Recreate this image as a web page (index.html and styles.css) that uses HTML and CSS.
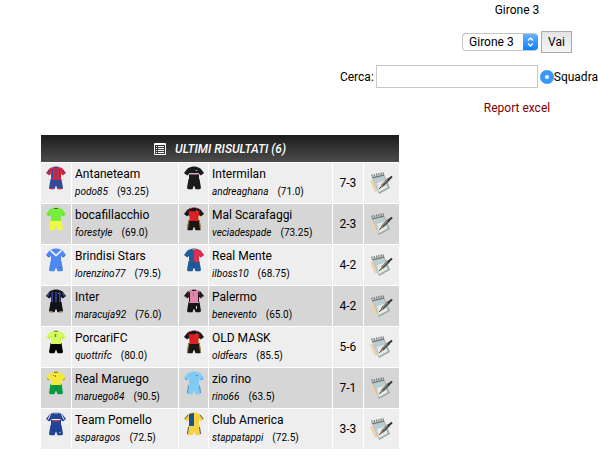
FILE: index.html
```
<!DOCTYPE html>
<html lang="it">

<head>
  <meta charset="UTF-8">
  <meta name="viewport" content="width=device-width, initial-scale=1.0">
  <title>Girone 3</title>
  <link rel="stylesheet" href="styles.css">
</head>

<body>

  <!-- icone condivise -->
  <svg class="sprite" aria-hidden="true">
    <symbol id="kit" viewBox="0 0 20 24">
      <path class="shorts" d="M4.5 13h11l1.5 9-1 1.2h-4.5L10.300 20h-.6l-1.200 3.200H4L3 22z" />
      <path class="sleeve" d="M6 1.500 3.500 2.500 0 7l3.200 2.500L5.500 7.500z" />
      <path class="sleeve" d="M14 1.500 16.500 2.500 20 7l-3.200 2.500-2.300-2z" />
      <path class="shirt" d="M4.500 2 8 .8h4L15.500 2 15 7.500v6.500H5V7.500z" />
      <path class="collar" d="M7.500 .7h5L11.500 2h-3z" />
    </symbol>
    <symbol id="pad" viewBox="0 0 24 24">
      <path fill="#ecd3b0" d="M1 10l4-2 4 12-3 1z" />
      <path fill="#9ea7a6" d="M3 6 15 3l6 14-11 6z" />
      <path fill="#bccdd0" d="M3 5.500 14.500 3 19 16l-9.500 5.500z" />
      <path fill="#e3ecea" d="M8 12l7-2 3.500 6.500-8.500 4.500z" />
      <path fill="none" stroke="#6f7774" stroke-width="1.200" d="M3 5.500V3.500M5.300 5V3M7.600 4.500v-2M9.900 4V2M12.200 3.500v-2M14.300 3.200V1.500M3 6.800l12-2.700" />
      <path fill="none" stroke="#555" stroke-width="3" d="M13.500 14.500 20 8" />
      <path fill="none" stroke="#9b9390" stroke-width="1" d="M13.500 13.500 19 8" />
      <path fill="none" stroke="#333" stroke-width="2" d="M19 9l4-3.500" />
      <path fill="#b5652f" d="M12.500 13.500l2 2-3.500 1.500z" />
      <path fill="none" stroke="#444" stroke-width="1" d="M10 17.800l2.500-1.800" />
    </symbol>
  </svg>

  <form class="filters">
    <div class="filter-row">Girone 3</div>
    <div class="filter-row">
      <span class="select-box">
        <select name="girone" aria-label="Girone">
          <option>Girone 1</option>
          <option>Girone 2</option>
          <option selected>Girone 3</option>
        </select>
        <svg class="arrows" viewBox="0 0 15 18" aria-hidden="true">
          <path d="M5 7.500 7.500 5 10 7.500M5 10.500 7.500 13 10 10.500" />
        </svg>
      </span>
      <button type="button">Vai</button>
    </div>
    <div class="search-row">
      <label for="cerca">Cerca:</label>
      <input type="text" id="cerca" name="cerca">
      <span class="choice"><input type="radio" id="squadra" name="tipo" checked><label for="squadra">Squadra</label></span>
    </div>
    <div class="filter-row"><a class="report" href="#">Report excel</a></div>
  </form>

  <table class="results">
    <colgroup>
      <col class="col-kit">
      <col class="col-home">
      <col class="col-kit">
      <col class="col-away">
      <col class="col-score">
      <col class="col-pad">
    </colgroup>
    <thead>
      <tr>
        <th colspan="6">
          <div class="heading">
            <svg class="list" viewBox="0 0 12 12" aria-hidden="true">
              <path d="M.5 .5h11v11H.5zM1 1.500h10M2 3.500h1M4 3.500h6M2 5.500h1M4 5.500h6M2 7.500h1M4 7.500h6M2 9.500h1M4 9.500h6" />
            </svg>
            <span>ULTIMI RISULTATI (6)</span>
          </div>
        </th>
      </tr>
    </thead>
    <tbody>
      <tr>
        <td class="kit">
          <svg class="antaneteam" viewBox="0 0 20 24">
            <use href="#kit" />
            <path stroke="#34499c" d="M6.500 3v10M10 2v11M13.500 3v10M3.500 3.500l-2 4M16.500 3.500l2 4" />
            <path stroke="#d8263c" d="M3.500 22.500H8M12 22.500h4.500" />
          </svg>
        </td>
        <td class="team"><div class="name">Antaneteam</div><div class="coach"><i>podo85</i><span>(93.25)</span></div></td>
        <td class="kit">
          <svg class="black" viewBox="0 0 20 24">
            <use href="#kit" />
            <path stroke="#aebdcb" d="M5 7.500h10" />
            <path stroke="#a34a5a" d="M5 8.500h10" />
            <path stroke="#8fa3b5" d="M11.500 4.500h2" />
          </svg>
        </td>
        <td class="team"><div class="name">Intermilan</div><div class="coach"><i>andreaghana</i><span>(71.0)</span></div></td>
        <td class="score">7-3</td>
        <td class="pad"><a href="#" aria-label="Dettagli"><svg viewBox="0 0 24 24"><use href="#pad" /></svg></a></td>
      </tr>
      <tr>
        <td class="kit">
          <svg class="bocafillacchio" viewBox="0 0 20 24">
            <use href="#kit" />
            <path stroke="#4fc832" d="M2 8.500l2-2M18 8.500l-2-2" />
            <path stroke="#46682f" d="M8 1.500h4" />
          </svg>
        </td>
        <td class="team"><div class="name">bocafillacchio</div><div class="coach"><i>forestyle</i><span>(69.0)</span></div></td>
        <td class="kit">
          <svg class="red-black" viewBox="0 0 20 24">
            <use href="#kit" />
            <path stroke="#1b1718" stroke-width="2.500" d="M5 3h10" />
            <path stroke="#b79238" d="M5.500 9v4M14.500 9v4M4.500 14l-1 8M15.500 14l1 8M12 4h1.500" />
          </svg>
        </td>
        <td class="team"><div class="name">Mal Scarafaggi</div><div class="coach"><i>veciadespade</i><span>(73.25)</span></div></td>
        <td class="score">2-3</td>
        <td class="pad"><a href="#" aria-label="Dettagli"><svg viewBox="0 0 24 24"><use href="#pad" /></svg></a></td>
      </tr>
      <tr>
        <td class="kit">
          <svg class="brindisi" viewBox="0 0 20 24">
            <use href="#kit" />
            <path stroke="#fff" stroke-width="1.500" d="M4.500 2.500 10 7.500l5.500-5" />
            <path stroke="#3562b5" d="M13 19.500h2M1 7.500l2 1.500M19 7.500 17 9" />
          </svg>
        </td>
        <td class="team"><div class="name">Brindisi Stars</div><div class="coach"><i>lorenzino77</i><span>(79.5)</span></div></td>
        <td class="kit">
          <svg class="real-mente" viewBox="0 0 20 24">
            <use href="#kit" />
            <path fill="#dc2f50" d="M10 1.500 14 1.500l2.500 1L20 7l-3.200 2.500L15 8v6h-5z" />
            <path stroke="#1c4474" d="M10 14v6" />
            <path stroke="#99885f" d="M8 1.500h4" />
          </svg>
        </td>
        <td class="team"><div class="name">Real Mente</div><div class="coach"><i>ilboss10</i><span>(68.75)</span></div></td>
        <td class="score">4-2</td>
        <td class="pad"><a href="#" aria-label="Dettagli"><svg viewBox="0 0 24 24"><use href="#pad" /></svg></a></td>
      </tr>
      <tr>
        <td class="kit">
          <svg class="inter" viewBox="0 0 20 24">
            <use href="#kit" />
            <path stroke="#3547aa" stroke-width="1.500" d="M6.200 3v10M10 3v10M13.800 3v10M3.500 4l-2 3.500M16.500 4l2 3.500" />
            <path stroke="#a78f50" d="M3.500 22.500h3M13.500 22.500h3M12 4.500h1" />
          </svg>
        </td>
        <td class="team"><div class="name">Inter</div><div class="coach"><i>maracuja92</i><span>(76.0)</span></div></td>
        <td class="kit">
          <svg class="palermo" viewBox="0 0 20 24">
            <use href="#kit" />
            <path stroke="#1d1719" d="M5.500 3v10M14.500 3v10" />
            <path stroke="#b96085" d="M9.500 4v3M1 7.500l2 1.500M19 7.500 17 9" />
            <path stroke="#ddd" d="M12.500 17v3" />
          </svg>
        </td>
        <td class="team"><div class="name">Palermo</div><div class="coach"><i>benevento</i><span>(65.0)</span></div></td>
        <td class="score">4-2</td>
        <td class="pad"><a href="#" aria-label="Dettagli"><svg viewBox="0 0 24 24"><use href="#pad" /></svg></a></td>
      </tr>
      <tr>
        <td class="kit">
          <svg class="porcari" viewBox="0 0 20 24">
            <use href="#kit" />
            <path stroke="#7d8245" stroke-width="1.500" d="M9.500 4v3" />
            <path stroke="#b2d957" d="M2 8.500l2-2M18 8.500l-2-2" />
          </svg>
        </td>
        <td class="team"><div class="name">PorcariFC</div><div class="coach"><i>quottrifc</i><span>(80.0)</span></div></td>
        <td class="kit">
          <svg class="red-black" viewBox="0 0 20 24">
            <use href="#kit" />
            <path stroke="#1b1718" stroke-width="2.500" d="M5 3h10" />
            <path stroke="#b79238" d="M5.500 9v4M14.500 9v4M4.500 14l-1 8M15.500 14l1 8M12 4h1.500" />
          </svg>
        </td>
        <td class="team"><div class="name">OLD MASK</div><div class="coach"><i>oldfears</i><span>(85.5)</span></div></td>
        <td class="score">5-6</td>
        <td class="pad"><a href="#" aria-label="Dettagli"><svg viewBox="0 0 24 24"><use href="#pad" /></svg></a></td>
      </tr>
      <tr>
        <td class="kit">
          <svg class="maruego" viewBox="0 0 20 24">
            <use href="#kit" />
            <path stroke="#8a8234" d="M7 4.500h1M9.500 4v2M1 7.500l2 1.500M19 7.500 17 9" />
            <path stroke="#087d35" d="M10 14v6" />
          </svg>
        </td>
        <td class="team"><div class="name">Real Maruego</div><div class="coach"><i>maruego84</i><span>(90.5)</span></div></td>
        <td class="kit">
          <svg class="zio-rino" viewBox="0 0 20 24">
            <use href="#kit" />
            <path stroke="#456f91" d="M12 4.500h2M1 7.500l2 1.500M19 7.500 17 9M3.500 22l1-7M16.500 22l-1-7" stroke-width=".7" />
          </svg>
        </td>
        <td class="team"><div class="name">zio rino</div><div class="coach"><i>rino66</i><span>(63.5)</span></div></td>
        <td class="score">7-1</td>
        <td class="pad"><a href="#" aria-label="Dettagli"><svg viewBox="0 0 24 24"><use href="#pad" /></svg></a></td>
      </tr>
      <tr>
        <td class="kit">
          <svg class="pomello" viewBox="0 0 20 24">
            <use href="#kit" />
            <path stroke="#f2f2f6" d="M4.500 2.500l-2.500 5M15.500 2.500l2.500 5M5.500 7.500h9" />
            <path stroke="#d93a4b" stroke-width="1.500" d="M7 8.700h6" />
            <path stroke="#a8b5dc" d="M13 20.500h1.500" />
          </svg>
        </td>
        <td class="team"><div class="name">Team Pomello</div><div class="coach"><i>asparagos</i><span>(72.5)</span></div></td>
        <td class="kit">
          <svg class="america" viewBox="0 0 20 24">
            <use href="#kit" />
            <path fill="#175293" d="M5 2l3-.8h2V14H5z" />
            <path stroke="#2d5c83" d="M4 3 .8 7M16 3l3.200 4M4.500 15l-1 7M15.500 15l1 7" />
          </svg>
        </td>
        <td class="team"><div class="name">Club America</div><div class="coach"><i>stappatappi</i><span>(72.5)</span></div></td>
        <td class="score">3-3</td>
        <td class="pad"><a href="#" aria-label="Dettagli"><svg viewBox="0 0 24 24"><use href="#pad" /></svg></a></td>
      </tr>
    </tbody>
  </table>

</body>

</html>
```
FILE: styles.css
```
* {
  box-sizing: border-box;
}

body {
  margin: 0;
  background-color: #fff;
  color: #000;
  font-family: Roboto, "Liberation Sans", sans-serif;
  font-size: 12px;
  line-height: 16px;
}

button,
input,
select {
  margin: 0;
  font: inherit;
  color: inherit;
}

.sprite {
  display: none;
}

/* filtri */
.filters {
  display: flex;
  flex-direction: column;
  align-items: flex-end;
  padding-top: 2px;
}

.filter-row {
  display: flex;
  justify-content: center;
  align-items: center;
  gap: 3px;
  width: 162px;
}

.filter-row + .filter-row {
  margin-top: 13px;
}

.search-row {
  display: flex;
  align-items: center;
  gap: 2px;
  margin: 12px 0;
}

.select-box {
  display: flex;
  width: 76px;
  height: 18px;
  border: 1px solid #c4c4c4;
  border-right: 0;
  border-radius: 4px;
  overflow: hidden;
}

.select-box select {
  flex: 1;
  min-width: 0;
  padding: 0 0 0 6px;
  border: 0;
  background: none;
  line-height: 16px;
  appearance: none;
}

.arrows {
  width: 15px;
  height: 18px;
  margin: -1px 0;
  background: linear-gradient(#6cb3fa, #087eff);
}

.arrows path {
  fill: none;
  stroke: #fff;
  stroke-width: 1.3;
}

button {
  height: 22px;
  padding: 0 6px;
  border: 1px solid #aaa;
  background: linear-gradient(#e4e4e4, #f6f6f6);
}

input[type="text"] {
  width: 162px;
  height: 23px;
  border: 1px solid #c8c8c8;
  background-color: #fff;
}

.choice {
  display: flex;
  align-items: center;
}

input[type="radio"] {
  width: 14px;
  height: 14px;
  border: 5px solid #3798f5;
  border-radius: 50%;
  background-color: #fff;
  appearance: none;
}

.report {
  color: #800000;
  text-decoration: none;
}

/* ultimi risultati */
.results {
  width: 358px;
  margin: 19px 0 12px 41px;
  border-spacing: 0;
  table-layout: fixed;
}

.col-kit {
  width: 30px;
}

.col-home {
  width: 107px;
}

.col-score {
  width: 31px;
}

.col-pad {
  width: 36px;
}

th {
  height: 27px;
  padding: 0;
  background: linear-gradient(#1c1c1c, #4c4c4c);
  color: #fff;
  font-style: italic;
  font-weight: 500;
}

.heading {
  display: flex;
  justify-content: center;
  align-items: center;
  gap: 9px;
}

.list {
  width: 12px;
  height: 12px;
}

.list path {
  fill: none;
  stroke: #fff;
}

td {
  height: 41px;
  padding: 0;
  border-top: 1px solid #fff;
  border-left: 1px solid #fff;
  background-color: #eee;
}

td:first-child {
  border-left: 0;
}

tr:nth-child(even) td {
  background-color: #d6d6d6;
}

.kit {
  padding-top: 3px;
  vertical-align: top;
}

.kit svg {
  display: block;
  width: 20px;
  height: 24px;
  margin: 0 auto;
  fill: none;
}

.team {
  padding: 3px 0 0 3px;
  vertical-align: top;
}

.coach {
  display: flex;
  gap: 9px;
  margin-top: 2px;
  font-size: 10px;
}

.score {
  text-align: center;
}

.pad svg {
  display: block;
  width: 24px;
  height: 24px;
  margin: 0 auto;
}

/* colori delle divise */
.shirt {
  fill: var(--shirt);
}

.sleeve {
  fill: var(--sleeve, var(--shirt));
}

.shorts {
  fill: var(--shorts, var(--shirt));
}

.collar {
  fill: var(--collar, var(--shirt));
}

.antaneteam {
  --shirt: #d8263c;
  --shorts: #34499c;
  --collar: #34499c;
}

.black {
  --shirt: #1b1b1d;
}

.bocafillacchio {
  --shirt: #74ef3c;
  --shorts: #f0f94a;
}

.red-black {
  --shirt: #dc2028;
  --sleeve: #1b1718;
  --shorts: #1b1718;
  --collar: #1b1718;
}

.brindisi {
  --shirt: #4e88f0;
}

.real-mente {
  --shirt: #1f5c9c;
}

.inter {
  --shirt: #111116;
}

.palermo {
  --shirt: #df86ae;
  --sleeve: #1d1719;
  --shorts: #151314;
  --collar: #1d1719;
}

.porcari {
  --shirt: #d3fa5c;
  --shorts: #050505;
  --collar: #6c8068;
}

.maruego {
  --shirt: #f5e83c;
  --shorts: #089a40;
  --collar: #738048;
}

.zio-rino {
  --shirt: #7fcbf5;
}

.pomello {
  --shirt: #234495;
  --collar: #8796b5;
}

.america {
  --shirt: #fbd042;
}
```
